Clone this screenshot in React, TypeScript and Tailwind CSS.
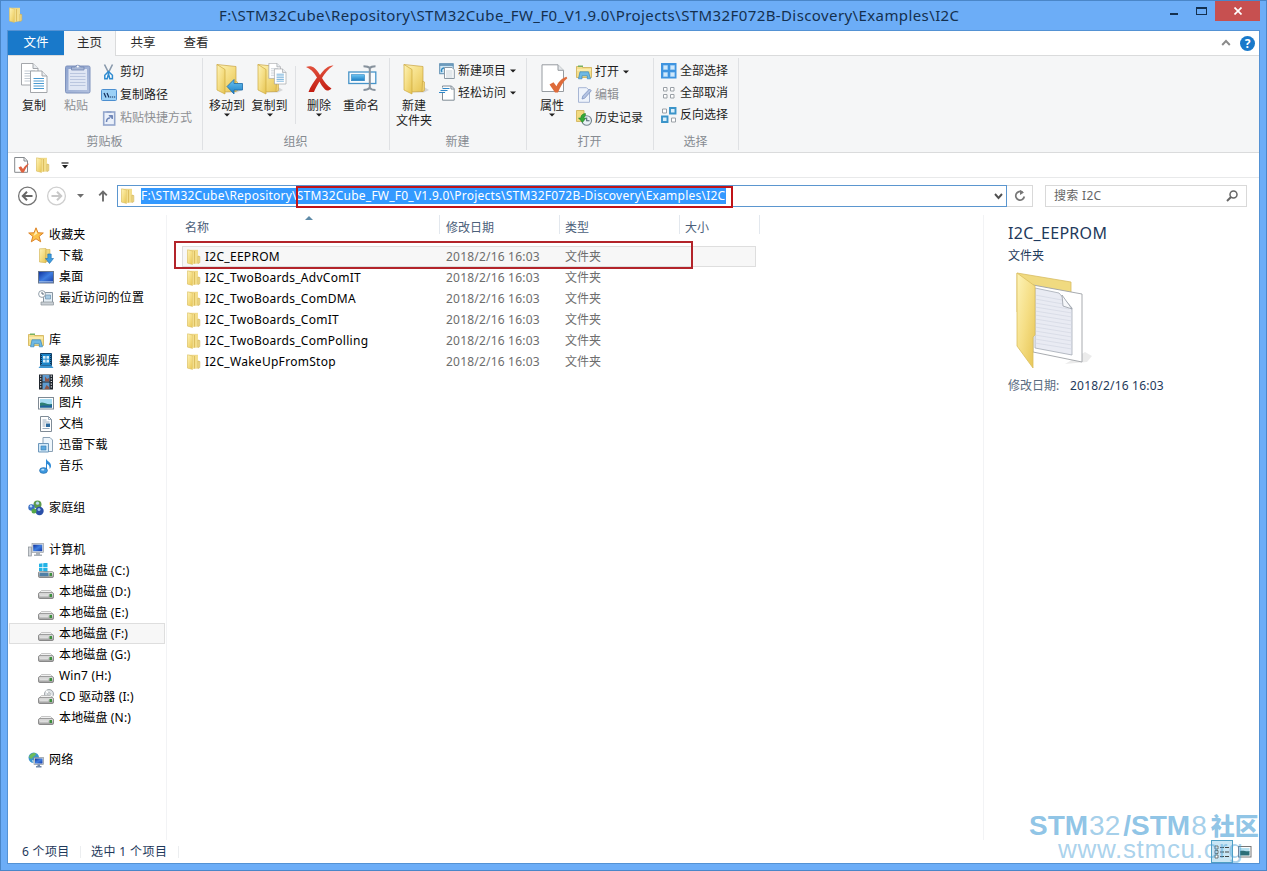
import type { ReactNode } from "react";

const FULL_PATH =
  "F:\\STM32Cube\\Repository\\STM32Cube_FW_F0_V1.9.0\\Projects\\STM32F072B-Discovery\\Examples\\I2C";

/* ---------- icons ---------- */

function Defs() {
  return (
    <svg width="0" height="0" className="absolute">
      <defs>
        <linearGradient id="gold" x1="0" y1="0" x2="1" y2="1">
          <stop offset="0" stopColor="#fdf3b8" />
          <stop offset="0.5" stopColor="#f5de85" />
          <stop offset="1" stopColor="#e6c452" />
        </linearGradient>
        <linearGradient id="goldDark" x1="0" y1="0" x2="0" y2="1">
          <stop offset="0" stopColor="#efd98a" />
          <stop offset="1" stopColor="#d9b548" />
        </linearGradient>
        <linearGradient id="sky" x1="0" y1="0" x2="0" y2="1">
          <stop offset="0" stopColor="#6cc4f2" />
          <stop offset="1" stopColor="#1c7ec4" />
        </linearGradient>
        <linearGradient id="screen" x1="0" y1="0" x2="1" y2="1">
          <stop offset="0" stopColor="#0d2f9c" />
          <stop offset="0.5" stopColor="#3f7ee0" />
          <stop offset="1" stopColor="#1339a8" />
        </linearGradient>
        <linearGradient id="metal" x1="0" y1="0" x2="0" y2="1">
          <stop offset="0" stopColor="#f2f2f2" />
          <stop offset="1" stopColor="#9a9a9a" />
        </linearGradient>
        <linearGradient id="clip" x1="0" y1="0" x2="1" y2="1">
          <stop offset="0" stopColor="#8da3cf" />
          <stop offset="1" stopColor="#b3c1de" />
        </linearGradient>
        <linearGradient id="red" x1="0" y1="0" x2="0" y2="1">
          <stop offset="0" stopColor="#e2523e" />
          <stop offset="1" stopColor="#c21d12" />
        </linearGradient>
      </defs>
    </svg>
  );
}

function SmallFolder() {
  return (
    <svg width="16" height="16" viewBox="0 0 16 16" className="shrink-0">
      <path d="M1.500.8H12v13.500H1.500z" fill="url(#goldDark)" />
      <path d="M1.500.8L6.500 2v13.500l-5-1.500z" fill="url(#gold)" stroke="#d8bd62" strokeWidth=".5" />
      <path d="M6.500 2.500L12 1v13l-5.500 1z" fill="#f3de8c" />
      <path d="M8.500 2v12.500" stroke="#d3b04a" strokeWidth=".7" />
      <path d="M12 7l1.800.6v6L12 14.500z" fill="#f5e190" stroke="#c9a94f" strokeWidth=".6" />
    </svg>
  );
}

function BigFolder() {
  return (
    <g>
      <path d="M8 29l14 .5 5-2.500-5-3z" fill="#000" opacity=".13" />
      <path d="M2 1.500L21 3.500v25L9 29z" fill="url(#gold)" stroke="#c8a443" strokeWidth=".7" />
      <path d="M2 1.500L10 6.500v24.500L2 27z" fill="url(#gold)" stroke="#cda93e" strokeWidth=".7" />
      <path d="M20.500 18l2 1v8.500l-2.500 1.300z" fill="#f0d374" stroke="#c9a443" strokeWidth=".6" />
    </g>
  );
}

function Page({ x, y, lines = "#4a9ad0" }: { x: number; y: number; lines?: string }) {
  return (
    <g transform={`translate(${x} ${y})`}>
      <path d="M.5.5H12l5 5v16.500H.5z" fill="#fff" stroke="#9a9da1" strokeWidth=".9" />
      <path d="M12 .5v5h5" fill="#e7ebef" stroke="#9a9da1" strokeWidth=".9" />
      <path d="M3.500 8h10.500M3.500 10.500h10.500M3.500 13h10.500M3.500 15.500h10.500M3.500 18h10.500" stroke={lines} strokeWidth="1" />
    </g>
  );
}

function CopyIcon() {
  return (
    <svg width="28" height="32" viewBox="0 0 28 32">
      <Page x={0} y={0} lines="#c3cbd3" />
      <Page x={9} y={7.5} />
    </svg>
  );
}

function PasteIcon() {
  return (
    <svg width="26" height="32" viewBox="0 0 26 32">
      <rect x=".5" y="3" width="24.500" height="27" rx="1.500" fill="url(#clip)" stroke="#7e92bd" />
      <rect x="3.500" y="6" width="18.500" height="21" fill="#dfe6f4" />
      <path d="M5 10.500h15.500M5 13.500h15.500M5 16.500h15.500M5 19.500h15.500M5 22.500h15.500" stroke="#bac6df" strokeWidth="1" />
      <path d="M6.500 7V4h3.500a3 3 0 0 1 5.500 0H19v3z" fill="#a7b7d6" stroke="#7488b4" strokeWidth=".8" />
      <circle cx="12.800" cy="3.500" r="1" fill="#fff" />
    </svg>
  );
}

function CutIcon() {
  return (
    <svg width="16" height="16" viewBox="0 0 16 16">
      <path d="M3.500.5l5 10M11.500.5l-5 10" stroke="#8798ab" strokeWidth="1.600" fill="none" />
      <path d="M7.500 7.500l-3.700 3.700v3.500h2.400l1.300-5 1.300 5h2.600v-3.500z" fill="#fff" stroke="#2f8bd0" strokeWidth="1.500" />
    </svg>
  );
}

function CopyPathIcon() {
  return (
    <svg width="16" height="16" viewBox="0 0 16 16">
      <rect x=".5" y="2.500" width="15" height="11" rx="1" fill="#9bd0f6" stroke="#4c8fd0" />
      <path d="M3 6l2 4.500M6 6l2 4.500" stroke="#15305c" strokeWidth="1.200" />
      <path d="M9 10h1.200M11 10h1.200M13 10h1.200" stroke="#15305c" strokeWidth="1.200" />
    </svg>
  );
}

function ShortcutIcon() {
  return (
    <svg width="16" height="16" viewBox="0 0 16 16">
      <rect x="2.700" y="2" width="11" height="13" fill="#eaf0fa" stroke="#93a6cc" strokeWidth="1.600" />
      <path d="M5.500 3V1h5v2z" fill="#93a6cc" />
      <path d="M5.500 12c0-3 1.500-4 3.500-4" stroke="#6f86b8" strokeWidth="1.500" fill="none" />
      <path d="M8 5.500h3.500V9z" fill="#6f86b8" stroke="#6f86b8" />
    </svg>
  );
}

function MoveToIcon() {
  return (
    <svg width="30" height="33" viewBox="0 0 30 33">
      <BigFolder />
      <path d="M12 23.500l7-7v4h8.500v6.500H19v4z" fill="url(#sky)" stroke="#1b6bab" strokeWidth=".8" />
    </svg>
  );
}

function CopyToIcon() {
  return (
    <svg width="32" height="33" viewBox="0 0 32 33">
      <BigFolder />
      <g transform="translate(12.500 0) scale(.7)">
        <Page x={0} y={0} lines="#c3cbd3" />
        <Page x={8} y={8} />
      </g>
    </svg>
  );
}

function DeleteIcon() {
  return (
    <svg width="30" height="28" viewBox="0 0 30 28">
      <path
        d="M1 2c5-2 9-.5 14 8C19 4 24 0 28.500.5 23 4 19.500 8.500 17 13c2.500 4.500 5 7.500 9.500 10.500-2.500 2.500-5 2.500-6.500 1-2.500-2.500-4-5-5.500-8-2.500 4-4.500 7.500-5.500 10.500H3.500C5.500 21.500 8.500 17 12 12.500 8.500 6.500 5 3.500 1 2z"
        fill="url(#red)"
      />
    </svg>
  );
}

function RenameIcon() {
  return (
    <svg width="30" height="28" viewBox="0 0 30 28">
      <rect x=".8" y="7" width="27" height="11.500" fill="#f7fbfe" stroke="#4794c9" strokeWidth="1.300" />
      <rect x="3.500" y="9.700" width="13" height="6" fill="url(#sky)" stroke="#2a82bf" strokeWidth=".6" />
      <path d="M15.500 1.200c3 0 5 .3 6.300 2 1.200-1.700 3-2 5.700-2M21.800 3v19.500M15.500 25c3 0 5-.5 6.300-2.300C23 24.500 25 25 27.500 25" fill="none" stroke="#87929d" strokeWidth="2" />
    </svg>
  );
}

function NewFolderIcon() {
  return (
    <svg width="28" height="33" viewBox="0 0 28 33">
      <BigFolder />
    </svg>
  );
}

function NewItemIcon() {
  return (
    <svg width="16" height="16" viewBox="0 0 16 16">
      <rect x=".7" y=".7" width="13.500" height="10" fill="#cfe8f7" stroke="#5c8db1" />
      <path d="M.7 2h13.500" stroke="#5c8db1" strokeWidth="1.600" />
      <path d="M3 9a2.500 2.500 0 0 1 2.500-4" stroke="#2e86bd" fill="none" strokeWidth="1.400" />
      <path d="M5.500 4.500h7.500l2.300 2.300v8.700H5.500z" fill="#fff" stroke="#8b98a4" />
      <path d="M7 8h6.500M7 10h6.500M7 12h6.500M7 14h6.500" stroke="#b9c5cf" strokeWidth=".8" />
    </svg>
  );
}

function EasyAccessIcon() {
  return (
    <svg width="16" height="16" viewBox="0 0 16 16">
      <path d="M3.500 1h9l2.700 2.700v11.500H3.500z" fill="#fff" stroke="#7f8b96" />
      <path d="M0 2.500h7v5.500H0z" fill="#f5f6f7" />
      <path d="M12 1v3h3" fill="none" stroke="#7f8b96" />
      <path d="M3.500 3.500h7M1.500 5.500h7M0 7.500h6" stroke="#2f87c8" strokeWidth="1.200" />
    </svg>
  );
}

function PropertiesIcon() {
  return (
    <svg width="28" height="30" viewBox="0 0 28 30">
      <path d="M1 .8h16l5.500 5.500V27.500H1z" fill="#fff" stroke="#969ba0" />
      <path d="M17 .8v5.500h5.500" fill="#e3e6ea" stroke="#969ba0" />
      <path d="M8.500 20.500l4-2.300 3 4c2-4.500 5-8 10-9.500l.8 1.500C22 17.500 19.500 22.500 17 28.500h-3z" fill="#de6b3a" />
    </svg>
  );
}

function LibraryIcon() {
  return (
    <svg width="16" height="16" viewBox="0 0 16 16" className="shrink-0">
      <path d="M.5 2.500h5l1 1h9v10H.5z" fill="#f4df8b" stroke="#cfae50" strokeWidth=".8" />
      <path d="M2 1.500h5v1.500H2z" fill="#78b060" />
      <path d="M1 6h14" stroke="#fff6cc" />
      <path d="M2.500 14.800l1.500-7h8.500l2 7h-3.200v-3H6v3z" fill="#6fb9e4" stroke="#3a87bd" strokeWidth=".7" />
    </svg>
  );
}

function EditIcon() {
  return (
    <svg width="16" height="16" viewBox="0 0 16 16">
      <path d="M2.500.7h8l3 3v11.600h-11z" fill="#eef3fb" stroke="#a7b6d4" />
      <path d="M6 12l.8-3L13.500 2l1.800 1.800-6.700 7.500z" fill="#b3c3e2" stroke="#7c92c0" strokeWidth=".8" />
    </svg>
  );
}

function HistoryIcon() {
  return (
    <svg width="16" height="16" viewBox="0 0 16 16">
      <path d="M.5.5H8v11H.5z" fill="#f2db80" stroke="#cfae50" strokeWidth=".8" />
      <circle cx="10.700" cy="10.500" r="4.800" fill="#e9f1f5" stroke="#75868f" strokeWidth="1.100" />
      <path d="M10.700 7.500v3.300h2.800" fill="none" stroke="#4d6270" strokeWidth="1.100" />
      <path d="M9.500 3.500C6 3.500 4.800 6 4.800 8H2.500l4 4.500L10 8H8c0-1.200.5-2 1.500-2.500z" fill="#35a838" stroke="#1e7f24" strokeWidth=".5" />
    </svg>
  );
}

function SelectAllIcon() {
  return (
    <svg width="16" height="16" viewBox="0 0 16 16">
      <rect width="15.500" height="15.500" fill="#3f94e0" />
      <path d="M2.500 2.500h4v4h-4zM9.500 2.500h4v4h-4zM2.500 9.500h4v4h-4zM9.500 9.500h4v4h-4z" fill="#cfe8fb" stroke="#a9d4f7" strokeWidth=".6" />
    </svg>
  );
}

function SelectNoneIcon() {
  return (
    <svg width="16" height="16" viewBox="0 0 16 16">
      <path d="M2.500 2.500h3.500v3.500h-3.500zM9.500 2.500h3.500v3.500h-3.500zM2.500 9.500h3.500v3.500h-3.500zM9.500 9.500h3.500v3.500h-3.500z" fill="#fff" stroke="#9aa0a6" />
    </svg>
  );
}

function InvertIcon() {
  return (
    <svg width="16" height="16" viewBox="0 0 16 16">
      <path d="M1.500 2h4v4h-4zM10.500 11h4v4h-4z" fill="#fff" stroke="#9aa0a6" />
      <path d="M9 1h5.500v5.500H9zM1 9.500h5.500v5.500H1z" fill="#d9eefa" stroke="#3b94c9" strokeWidth="1.900" />
    </svg>
  );
}

function SmallCheckPage() {
  return (
    <svg width="16" height="16" viewBox="0 0 16 16">
      <path d="M.7.500h9.500l3.300 3.300v11.500H.7z" fill="#fff" stroke="#85898d" />
      <path d="M10 .5v3.500h3.500" fill="none" stroke="#85898d" />
      <path d="M4.500 10.500l2.500-1.200 2 2.700C10.500 9 12.500 7.500 15 6.500 13 9.500 11.500 12 9.800 15.500H7.500z" fill="#de6240" />
    </svg>
  );
}

function Caret() {
  return (
    <svg width="6" height="4" viewBox="0 0 6 4" className="shrink-0">
      <path d="M0 .5h6L3 3.500z" fill="#1e1e1e" />
    </svg>
  );
}

function StarIcon() {
  return (
    <svg width="16" height="16" viewBox="0 0 16 16">
      <path d="M8 .8l2 5 5.300.2-4.200 3.400 1.600 5.400L8 11.800l-4.700 3 1.600-5.400L.7 6 6 5.800z" fill="#fdc24a" stroke="#dc8326" strokeWidth="1" strokeLinejoin="round" />
      <path d="M8 3l1.300 3.600L5.500 9z" fill="#fff0b8" />
    </svg>
  );
}

function DownloadsIcon() {
  return (
    <svg width="16" height="16" viewBox="0 0 16 16">
      <path d="M1.500.8L8 .5v14.200l-6.500-.7z" fill="url(#gold)" stroke="#d0b04e" strokeWidth=".6" />
      <path d="M8 1.500h4v12H8z" fill="#efd67c" stroke="#c9a641" strokeWidth=".5" />
      <path d="M9.800 6h3.400v4.500h2.300l-4 5-4-5h2.300z" fill="#3f9de0" stroke="#1a6cae" strokeWidth=".6" />
    </svg>
  );
}

function DesktopIcon() {
  return (
    <svg width="16" height="16" viewBox="0 0 16 16">
      <rect x=".5" y="2.500" width="15" height="11.500" fill="url(#screen)" stroke="#68778c" />
      <path d="M1 12.800h14" stroke="#a9c4e8" strokeWidth="1" />
    </svg>
  );
}

function RecentIcon() {
  return (
    <svg width="16" height="16" viewBox="0 0 16 16">
      <path d="M5.500 2.500h9V13h-9z" fill="#e5eef5" stroke="#8895a1" />
      <path d="M7.500 5h5v4h-5z" fill="#a9cbe3" stroke="#5e87a6" strokeWidth=".6" />
      <path d="M3 12h12.500v3H3z" fill="#c9cfd5" stroke="#8a929a" strokeWidth=".7" />
      <circle cx="4" cy="4" r="3.400" fill="#fff" stroke="#8895a1" strokeWidth=".9" />
      <path d="M4 2v2h2" fill="none" stroke="#4d5f70" strokeWidth=".9" />
    </svg>
  );
}

function StormIcon() {
  return (
    <svg width="16" height="16" viewBox="0 0 16 16">
      <path d="M2.500.5h11v12h-11z" fill="#1e86c9" stroke="#123f66" />
      <path d="M5 3h6v6.500H5z" fill="#d8f0fc" />
      <path d="M8 3v6.500M5 6.200h6" stroke="#1e86c9" strokeWidth=".9" />
      <path d="M3.500 2v10M12.500 2v10" stroke="#0e2e4d" strokeDasharray="1 1" />
      <path d="M.5 15l2-2.500h11l2 2.500z" fill="#3b94d0" />
    </svg>
  );
}

function VideoIcon() {
  return (
    <svg width="16" height="16" viewBox="0 0 16 16">
      <rect x="1" y=".5" width="14" height="15" fill="#20262e" />
      <path d="M4.500 1h7v6.500h-7zM4.500 8.500h7V15h-7z" fill="#5f9bd0" />
      <path d="M7 2.500l2 2.500 2-1v3.500H7zM6.500 15l2-4 2.500 2v2z" fill="#8f5548" />
      <path d="M2.700 1.500v13M13.300 1.500v13" stroke="#fff" strokeWidth="1.100" strokeDasharray="1.200 1.500" />
    </svg>
  );
}

function PictureIcon() {
  return (
    <svg width="16" height="16" viewBox="0 0 16 16">
      <rect x=".5" y="2.500" width="15" height="11.500" fill="#fff" stroke="#7e8993" />
      <rect x="2" y="4" width="12" height="8.500" fill="#a6dcf2" />
      <path d="M2 8c3-2 6 2 12 1v3.500H2z" fill="#2d7f74" />
      <path d="M2 11c4-1 8 0 12-1v2.500H2z" fill="#20609e" />
    </svg>
  );
}

function DocIcon() {
  return (
    <svg width="16" height="16" viewBox="0 0 16 16">
      <path d="M2.500.5h8l3 3v12h-11z" fill="#fff" stroke="#7f8b96" />
      <path d="M10.500.5v3h3M4.500 4h4M4.500 6h7M4.500 8h3M4.500 10h3M4.500 12.500h7" fill="none" stroke="#8fa2b4" strokeWidth=".9" />
      <path d="M8 7.500h4V11H8z" fill="#2f6b9f" />
    </svg>
  );
}

function ThunderIcon() {
  return (
    <svg width="16" height="16" viewBox="0 0 16 16">
      <path d="M5 .5h7l2.500 2.500v11.500H5z" fill="#eef6fc" stroke="#8ba1b5" />
      <path d="M.5 6.500h10v8.500H.5z" fill="#d3e9f8" stroke="#6d97bb" />
      <path d="M3 9h5v4H3z" fill="#5ba8de" stroke="#3a7eb4" strokeWidth=".6" />
    </svg>
  );
}

function MusicIcon() {
  return (
    <svg width="16" height="16" viewBox="0 0 16 16">
      <path d="M8 .5c1 3 5.500 3.500 5 8-.5 1.500-1 2-1.500 2.500.5-3-1-4.500-2.500-5V13H8z" fill="#2f8bd6" />
      <ellipse cx="5.500" cy="12.500" rx="4" ry="2.900" fill="#3c97de" stroke="#165d9e" strokeWidth=".5" />
      <ellipse cx="4.800" cy="11.700" rx="1.600" ry=".9" fill="#bfe2fa" />
    </svg>
  );
}

function HomeGroupIcon() {
  return (
    <svg width="16" height="16" viewBox="0 0 16 16">
      <circle cx="9.500" cy="4.500" r="4" fill="#5d9a4c" />
      <circle cx="3.500" cy="7.500" r="3.200" fill="#3a6fc4" />
      <circle cx="11.500" cy="11" r="4.200" fill="#2a50a8" />
      <circle cx="6" cy="11" r="2.500" fill="#56a84a" />
      <circle cx="9.500" cy="3.200" r="1.600" fill="#b7dbf2" />
      <circle cx="3" cy="6.300" r="1.200" fill="#b7dbf2" />
      <circle cx="11" cy="9.500" r="1.500" fill="#9bc3f2" />
    </svg>
  );
}

function ComputerIcon() {
  return (
    <svg width="16" height="16" viewBox="0 0 16 16">
      <rect x=".5" y="5" width="2.800" height="9" fill="#d3d7db" stroke="#868d94" strokeWidth=".7" />
      <rect x="4" y="1.500" width="11.500" height="9" fill="#d9dde1" stroke="#8a929a" strokeWidth=".6" />
      <rect x="5.200" y="2.700" width="9" height="6.500" fill="url(#screen)" />
      <path d="M8 10.500h4v2h2v1.500H6v-1.500h2z" fill="#a9b0b7" />
    </svg>
  );
}

function Drive({ kind }: { kind?: "system" | "cd" }) {
  return (
    <svg width="16" height="16" viewBox="0 0 16 16">
      {kind === "cd" && (
        <g>
          <circle cx="11" cy="5" r="4.500" fill="#dfe3e6" stroke="#8c9297" strokeWidth=".8" />
          <path d="M11 5L8 1.800M11 5l3.500 2.800" stroke="#fff" strokeWidth="1.500" />
          <circle cx="11" cy="5" r="1.300" fill="#fff" stroke="#8c9297" strokeWidth=".7" />
        </g>
      )}
      {kind === "system" && (
        <path d="M1 .8l3.500-.5v3.700H1zM5.200.2L9.500-.3V4H5.200zM1 4.700h3.500v3.600L1 7.900zM5.200 4.700h4.300V9l-4.300-.6z" fill="#22b3e6" />
      )}
      {kind !== "system" && <path d="M1 9l2.500-2.500h9L15 9z" fill="#f1f1f1" stroke="#a5a5a5" strokeWidth=".6" />}
      <rect x=".5" y="8.700" width="15" height="5.800" rx="1.200" fill="url(#metal)" stroke="#777" strokeWidth=".8" />
      {kind === "system" ? (
        <rect x="1.500" y="9.700" width="9" height="3.500" fill="#4e7fa6" />
      ) : (
        <path d="M2 11.500h8" stroke="#dedede" strokeWidth="1.500" />
      )}
      <rect x="11.500" y="10" width="2.500" height="3" fill="#3e8f3e" />
    </svg>
  );
}

function NetworkIcon() {
  return (
    <svg width="16" height="16" viewBox="0 0 16 16">
      <circle cx="5.800" cy="5.800" r="5.300" fill="#3b95cf" />
      <path d="M2 3c2-2.500 5-2.500 6-1.500C8 4 5 4 4 6.500 3 7 1 6 1 5z" fill="#6dbb5b" />
      <path d="M4 8l3 .5v2.200L5 11z" fill="#bfe4f5" />
      <rect x="6" y="5.500" width="9.500" height="7" fill="#d6dade" stroke="#7e868e" strokeWidth=".6" />
      <rect x="7" y="6.500" width="7.500" height="5" fill="url(#screen)" />
      <path d="M9.500 12.500h2.500v1.500h1.500v1.500h-5.500V14h1.500z" fill="#6f87a8" />
    </svg>
  );
}

function OpenFolderLarge() {
  return (
    <svg width="78" height="100" viewBox="0 0 78 100">
      <path d="M50 92l22-2 5-6-7-4z" fill="#000" opacity=".08" />
      <path d="M2 1L56 10v60L2 40z" fill="#f0da80" stroke="#d8bd62" strokeWidth=".8" />
      <path d="M18 13l49 9v68L18 80z" fill="#fff" stroke="#9ea2a6" strokeWidth=".9" />
      <path d="M20 16l24 5 13 15v47L20 76z" fill="#e9ebf3" stroke="#a5abb5" strokeWidth=".8" />
      <g stroke="#d3d7e2" strokeWidth=".7">
        <path d="M20 23l27 5M20 27l28 5M20 31l34 6M20 35l37 6M20 39l37 6M20 43l37 6M20 47l37 6M20 51l37 6M20 55l37 6M20 59l37 6M20 63l37 6M20 67l37 6M20 71l37 6" />
      </g>
      <path d="M47 23l1 11 9 3z" fill="#f6f7fa" stroke="#979da6" strokeWidth=".8" />
      <path d="M2 1l18 13v49l-2 2v31L2 74z" fill="url(#gold)" stroke="#dcbf5e" strokeWidth=".8" />
    </svg>
  );
}

/* ---------- ribbon ---------- */

function Group({ label, className, children }: { label: string; className: string; children: ReactNode }) {
  return (
    <section className={`flex shrink-0 flex-col ${className}`}>
      <div className="mt-[2px] flex h-[92px] flex-col border-r border-[#dfe1e4]">
        <div className="flex h-[76px] items-start pt-px">{children}</div>
        <div className="pr-px text-center leading-[15px] text-[#868b91]">{label}</div>
      </div>
    </section>
  );
}

function BigButton({ icon, label, caret, className, dim }: { icon: ReactNode; label: ReactNode; caret?: boolean; className: string; dim?: boolean }) {
  return (
    <button className={`flex shrink-0 flex-col items-center whitespace-nowrap pt-[4px] leading-[15px] ${dim ? "text-[#8d8f93]" : "text-[#1e1e1e]"} ${className}`}>
      <span className="flex h-[35px] items-start justify-center">{icon}</span>
      <span>{label}</span>
      {caret && <Caret />}
    </button>
  );
}

function SmallButton({ icon, label, caret, dim, className }: { icon: ReactNode; label: string; caret?: boolean; dim?: boolean; className: string }) {
  return (
    <button className={`flex items-center whitespace-nowrap ${dim ? "text-[#8d8f93]" : "text-[#1e1e1e]"} ${className}`}>
      <span className="flex h-4 w-4 shrink-0">{icon}</span>
      <span className="mr-[4px] ml-[3px]">{label}</span>
      {caret && <Caret />}
    </button>
  );
}

function Ribbon() {
  return (
    <div className="flex h-[98px] shrink-0 border-t border-b border-[#dadbdc] bg-[#f5f6f7]">
      <Group label="剪贴板" className="w-[195px]">
        <BigButton icon={<span className="pl-[2px]"><CopyIcon /></span>} label="复制" className="ml-[5px] w-[42px]" />
        <BigButton icon={<span className="pl-[3px]"><PasteIcon /></span>} label="粘贴" dim className="w-[42px]" />
        <div className="ml-[4px] flex flex-col pt-[1px]">
          <SmallButton icon={<CutIcon />} label="剪切" className="h-[23px]" />
          <SmallButton icon={<CopyPathIcon />} label="复制路径" className="h-[23px]" />
          <SmallButton icon={<ShortcutIcon />} label="粘贴快捷方式" dim className="h-[23px]" />
        </div>
      </Group>
      <Group label="组织" className="w-[187px]">
        <BigButton icon={<span className="pl-[6px]"><MoveToIcon /></span>} label="移动到" caret className="ml-[3px] w-[42px]" />
        <BigButton icon={<span className="pl-[4px]"><CopyToIcon /></span>} label="复制到" caret className="w-[43px]" />
        <div className="mt-[7px] ml-[4px] h-[58px] w-px bg-[#dfe1e4]" />
        <BigButton icon={<span className="pt-[2px] pl-[2px]"><DeleteIcon /></span>} label="删除" caret className="ml-[2px] w-[42px]" />
        <BigButton icon={<span className="pt-[2px] pl-[3px]"><RenameIcon /></span>} label="重命名" className="w-[42px]" />
      </Group>
      <Group label="新建" className="w-[137px]">
        <BigButton icon={<span className="pl-[4px]"><NewFolderIcon /></span>} label={<>新建<br />文件夹</>} className="ml-[3px] w-[42px]" />
        <div className="ml-[4px] flex flex-col">
          <SmallButton icon={<NewItemIcon />} label="新建项目" caret className="h-[23px]" />
          <SmallButton icon={<EasyAccessIcon />} label="轻松访问" caret className="h-[22px]" />
        </div>
      </Group>
      <Group label="打开" className="w-[127px]">
        <BigButton icon={<span className="pt-px pl-[5px]"><PropertiesIcon /></span>} label="属性" caret className="ml-[5px] w-[40px]" />
        <div className="ml-[4px] flex flex-col pt-[1px]">
          <SmallButton icon={<LibraryIcon />} label="打开" caret className="h-[23px]" />
          <SmallButton icon={<EditIcon />} label="编辑" dim className="h-[23px]" />
          <SmallButton icon={<HistoryIcon />} label="历史记录" className="h-[23px]" />
        </div>
      </Group>
      <Group label="选择" className="w-[85px]">
        <div className="ml-[7px] flex flex-col">
          <SmallButton icon={<SelectAllIcon />} label="全部选择" className="h-[23px]" />
          <SmallButton icon={<SelectNoneIcon />} label="全部取消" className="h-[22px]" />
          <SmallButton icon={<InvertIcon />} label="反向选择" className="h-[22px]" />
        </div>
      </Group>
    </div>
  );
}

/* ---------- title, tabs, navigation ---------- */

function TitleBar() {
  return (
    <div className="flex h-[29px] shrink-0 items-start pl-[7px]">
      <span className="w-[100px] pt-[6px]"><SmallFolder /></span>
      <h1 className="w-[962px] pl-[111px] text-[15px] leading-[29px] tracking-[0.4px] whitespace-nowrap text-[#14304f]">{FULL_PATH}</h1>
      <div className="ml-[99px] flex">
        <svg width="46" height="20" viewBox="0 0 46 20">
          <path d="M1 13h8" stroke="#14304f" strokeWidth="2" />
          <rect x="27.500" y="6.500" width="10" height="7" fill="none" stroke="#14304f" />
          <path d="M27 7h11" stroke="#14304f" strokeWidth="2" />
        </svg>
        <button className="flex h-[20px] w-[45px] items-center justify-center bg-[#c75050]">
          <svg width="8" height="8" viewBox="0 0 8 8">
            <path d="M.5.5l7 7M7.500.5l-7 7" stroke="#fff" strokeWidth="1.700" />
          </svg>
        </button>
      </div>
    </div>
  );
}

function Tabs() {
  return (
    <div className="flex h-[24px] shrink-0 items-stretch text-[12.500px] text-[#2b2b2b]">
      <button className="w-[56px] bg-[#1979ca] text-white">文件</button>
      <button className="z-10 -mb-px w-[52px] border-r border-[#dadbdc] bg-[#f5f6f7]">主页</button>
      <button className="w-[54px]">共享</button>
      <button className="w-[52px]">查看</button>
      <div className="ml-auto flex items-center pr-[4px]">
        <svg width="10" height="8" viewBox="0 0 10 8" className="mr-[9px]">
          <path d="M1.200 6L5 2l3.800 4" fill="none" stroke="#8a8a8a" strokeWidth="1.900" />
        </svg>
        <span className="flex h-[15px] w-[15px] items-center justify-center rounded-full bg-[#1979ca] text-[12px] leading-[15px] font-bold text-white">?</span>
      </div>
    </div>
  );
}

function QuickAccess() {
  return (
    <div className="flex h-[25px] shrink-0 items-center border-b border-[#e8e9ea] pl-[6px]">
      <SmallCheckPage />
      <span className="ml-[5px]"><SmallFolder /></span>
      <svg width="8" height="7" viewBox="0 0 8 7" className="ml-[10px]">
        <path d="M.5 1h7" stroke="#1e1e1e" strokeWidth="1.200" />
        <path d="M1 3h6L4 6.500z" fill="#1e1e1e" />
      </svg>
    </div>
  );
}

function AddressRow() {
  return (
    <div className="flex h-[37px] shrink-0 items-start pt-[7px]">
      <svg width="109" height="22" viewBox="0 0 109 22">
        <circle cx="19.500" cy="11" r="8.900" fill="none" stroke="#757575" strokeWidth="1.300" />
        <path d="M24.500 11h-9M19 6.800L14.800 11l4.200 4.200" fill="none" stroke="#666" strokeWidth="2" />
        <circle cx="48.500" cy="11" r="8.900" fill="none" stroke="#cfcfcf" strokeWidth="1.300" />
        <path d="M43.500 11h9M49 6.800l4.200 4.200-4.200 4.200" fill="none" stroke="#c8c8c8" strokeWidth="2" />
        <path d="M69 9h7l-3.500 3.800z" fill="#6d6d6d" />
        <path d="M95 16.500V6.500M91.200 10.300L95 6.500l3.800 3.800" fill="none" stroke="#6d6d6d" strokeWidth="1.900" />
      </svg>
      <div className="flex h-[22px] w-[890px] items-center border border-[#5b96cf] pl-[2px]">
        <SmallFolder />
        <span className="relative ml-[5px] bg-[#3399ff] pr-[1px] leading-[16px] tracking-[0.23px] whitespace-nowrap text-white">
          {FULL_PATH}
          <span className="absolute -top-[2px] -right-[7px] h-[22px] w-[437px] border-2 border-[#c01318]" />
        </span>
        <svg width="9" height="7" viewBox="0 0 9 7" className="mr-[3px] ml-auto">
          <path d="M1 1l3.500 4L8 1" fill="none" stroke="#505050" strokeWidth="1.900" />
        </svg>
      </div>
      <div className="flex h-[22px] w-[26px] items-center justify-center border border-l-0 border-[#d9d9d9]">
        <svg width="12" height="12" viewBox="0 0 12 12">
          <path d="M8.500 2.200A4.300 4.300 0 1 0 10.300 6.500" fill="none" stroke="#777" strokeWidth="1.700" />
          <path d="M6 0v5l4-2.500z" fill="#777" />
        </svg>
      </div>
      <div className="ml-[12px] flex h-[22px] w-[202px] items-center border border-[#d9d9d9] pr-[8px] pl-[8px] text-[#666]">
        <span className="tracking-[0.3px]">搜索 I2C</span>
        <svg width="12" height="12" viewBox="0 0 12 12" className="ml-auto">
          <circle cx="7.500" cy="4.500" r="3.500" fill="none" stroke="#666" strokeWidth="1.500" />
          <path d="M5 7L1 11" stroke="#666" strokeWidth="2" />
        </svg>
      </div>
    </div>
  );
}

/* ---------- body ---------- */

type Item = { label: string; icon: ReactNode; root?: boolean; selected?: boolean } | null;

const tree: Item[] = [
  { label: "收藏夹", icon: <StarIcon />, root: true },
  { label: "下载", icon: <DownloadsIcon /> },
  { label: "桌面", icon: <DesktopIcon /> },
  { label: "最近访问的位置", icon: <RecentIcon /> },
  null,
  { label: "库", icon: <LibraryIcon />, root: true },
  { label: "暴风影视库", icon: <StormIcon /> },
  { label: "视频", icon: <VideoIcon /> },
  { label: "图片", icon: <PictureIcon /> },
  { label: "文档", icon: <DocIcon /> },
  { label: "迅雷下载", icon: <ThunderIcon /> },
  { label: "音乐", icon: <MusicIcon /> },
  null,
  { label: "家庭组", icon: <HomeGroupIcon />, root: true },
  null,
  { label: "计算机", icon: <ComputerIcon />, root: true },
  { label: "本地磁盘 (C:)", icon: <Drive kind="system" /> },
  { label: "本地磁盘 (D:)", icon: <Drive /> },
  { label: "本地磁盘 (E:)", icon: <Drive /> },
  { label: "本地磁盘 (F:)", icon: <Drive />, selected: true },
  { label: "本地磁盘 (G:)", icon: <Drive /> },
  { label: "Win7 (H:)", icon: <Drive /> },
  { label: "CD 驱动器 (I:)", icon: <Drive kind="cd" /> },
  { label: "本地磁盘 (N:)", icon: <Drive /> },
  null,
  { label: "网络", icon: <NetworkIcon />, root: true },
];

function Sidebar() {
  return (
    <nav className="w-[159px] shrink-0 border-r border-[#f2f3f5] pt-[9px] pl-px text-black">
      {tree.map((item, i) =>
        item ? (
          <div
            key={i}
            className={`flex h-[21px] w-[156px] items-center border whitespace-nowrap ${item.root ? "pl-[18px]" : "pl-[28px]"} ${
              item.selected ? "border-[#dedede] bg-[#f7f7f7]" : "border-transparent"
            }`}
          >
            {item.icon}
            <span className="ml-[5px] tracking-[0.15px]">{item.label}</span>
          </div>
        ) : (
          <div key={i} className="h-[21px]" />
        )
      )}
    </nav>
  );
}

const files = ["I2C_EEPROM", "I2C_TwoBoards_AdvComIT", "I2C_TwoBoards_ComDMA", "I2C_TwoBoards_ComIT", "I2C_TwoBoards_ComPolling", "I2C_WakeUpFromStop"];

function FileList() {
  return (
    <main className="w-[817px] shrink-0 border-r border-[#f2f3f5]">
      <div className="flex h-[31px] items-start leading-[25px] text-[#4c607a]">
        <div className="relative h-[19px] w-[273px] border-r border-[#e3e8ee] pl-[18px]">
          名称
          <svg width="8" height="4" viewBox="0 0 8 4" className="absolute top-px left-[138px]">
            <path d="M0 4l4-4 4 4z" fill="#5f8ba8" />
          </svg>
        </div>
        <div className="h-[19px] w-[120px] border-r border-[#e3e8ee] pl-[6px]">修改日期</div>
        <div className="h-[19px] w-[120px] border-r border-[#e3e8ee] pl-[5px]">类型</div>
        <div className="h-[19px] w-[80px] border-r border-[#e3e8ee] pl-[5px]">大小</div>
      </div>
      <div className="relative ml-[15px] w-[574px]">
        {files.map((name, i) => (
          <div key={name} className={`flex h-[21px] items-center border text-[#6d6d6d] ${i === 0 ? "border-[#dedede] bg-[#f7f7f7]" : "border-transparent"}`}>
            <span className="ml-[3px]"><SmallFolder /></span>
            <span className="ml-[3px] w-[241px] tracking-[0.28px] text-black">{name}</span>
            <span className="w-[119px] tracking-[0.2px]">2018/2/16 16:03</span>
            <span>文件夹</span>
          </div>
        ))}
        <div className="absolute -top-[5px] -left-[8px] h-[28px] w-[519px] border-2 border-[#b3242a]" />
      </div>
    </main>
  );
}

function Preview() {
  return (
    <aside className="flex flex-col pl-[24px] text-[#1e395b]">
      <h2 className="mt-[6px] text-[16px] leading-[24px] tracking-[0.3px]">I2C_EEPROM</h2>
      <p className="mt-[2px] leading-[18px]">文件夹</p>
      <div className="mt-[7px] ml-[7px]"><OpenFolderLarge /></div>
      <p className="mt-[5px] flex leading-[18px]">
        <span className="w-[62px] text-[#5a6b80]">修改日期:</span>
        <span className="tracking-[0.2px]">2018/2/16 16:03</span>
      </p>
    </aside>
  );
}

function StatusBar() {
  return (
    <footer className="relative flex h-[23px] shrink-0 items-center text-[#1e395b]">
      <span className="w-[72px] pl-[14px] tracking-[0.3px]">6 个项目</span>
      <span className="h-[12px] w-px bg-[#eceef0]" />
      <span className="w-[97px] pl-[10px] tracking-[0.4px]">选中 1 个项目</span>
      <span className="h-[12px] w-px bg-[#eceef0]" />
      <div className="ml-auto flex items-center pr-[7px]">
        <span className="flex h-[23px] w-[22px] items-center justify-center border border-[#4f9fc4] bg-[#c9e6f5]">
          <svg width="16" height="14" viewBox="0 0 16 14">
            <path d="M1 1h3v3H1zM1 5.500h3v3H1zM1 10h3v3H1z" fill="#fff" stroke="#555" strokeWidth=".8" />
            <path d="M6 2.500h4M11 2.500h4M6 7h4M11 7h4M6 11.500h4M11 11.500h4" stroke="#444" />
          </svg>
        </span>
        <svg width="14" height="12" viewBox="0 0 14 12" className="ml-[5px]">
          <rect x=".5" y=".5" width="12.500" height="10.500" fill="#fff" stroke="#777" />
          <path d="M2 2h9.500v4H2z" fill="#b7e0ef" />
          <path d="M2 5c4-1 6 1 9.500 0v4.500H2z" fill="#2d6f78" />
        </svg>
      </div>
      {/* forum watermark over the corner */}
      <div className="pointer-events-none absolute right-0 bottom-0 h-[54px] w-[230px] overflow-hidden font-['Liberation_Sans','Noto_Sans_CJK_SC',sans-serif] whitespace-nowrap text-[#4fa3d8]/65">
        <div className="flex h-[30px] items-baseline pt-px text-[28px] leading-[32px]">
          <b>STM</b>
          <span className="ml-px opacity-80">32</span>
          <b className="ml-[3px]">/STM</b>
          <span className="ml-px opacity-80">8</span>
          <b className="ml-[4px] text-[24px] leading-[32px] font-black">社区</b>
        </div>
        <div className="-mt-[3px] ml-[29px] text-[26px] leading-[26px] tracking-[0.7px] opacity-75">www.stmcu.org</div>
      </div>
    </footer>
  );
}

export default function App() {
  return (
    <div className="flex h-[871px] w-[1267px] flex-col overflow-hidden border border-[#4a86c8] bg-[#6cadf7] font-['Noto_Sans','Noto_Sans_CJK_SC',sans-serif] text-[12px]">
      <Defs />
      <TitleBar />
      <div className="mx-[6px] flex h-[834px] flex-col border border-[#5492d4] bg-white">
        <Tabs />
        <Ribbon />
        <QuickAccess />
        <AddressRow />
        <div className="flex min-h-0 flex-1">
          <Sidebar />
          <FileList />
          <Preview />
        </div>
        <StatusBar />
      </div>
    </div>
  );
}
